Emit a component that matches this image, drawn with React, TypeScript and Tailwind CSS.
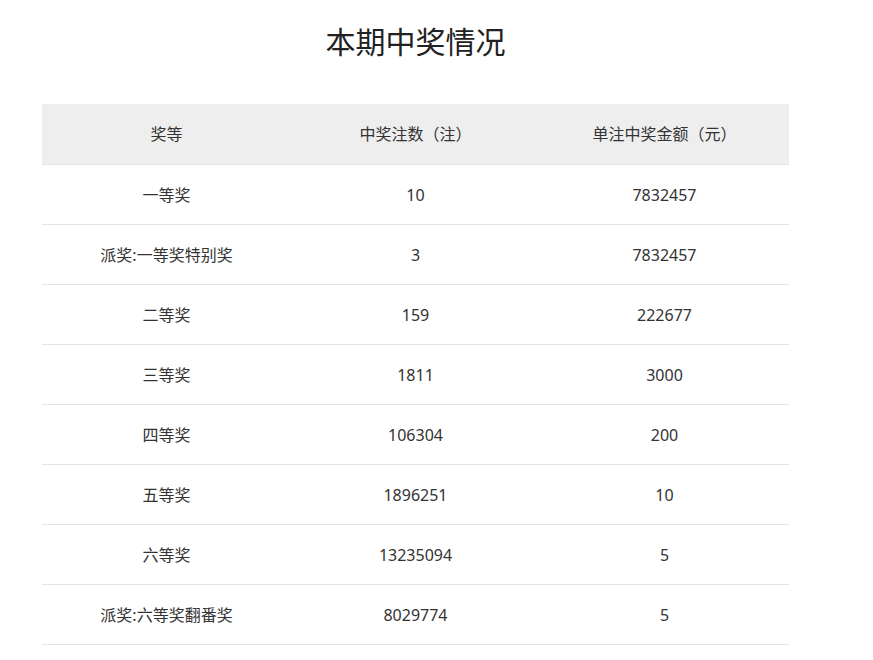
import { type FC } from "react";

type Row = { level: string; count: string; amount: string };

const rows: Row[] = [
  { level: "一等奖", count: "10", amount: "7832457" },
  { level: "派奖:一等奖特别奖", count: "3", amount: "7832457" },
  { level: "二等奖", count: "159", amount: "222677" },
  { level: "三等奖", count: "1811", amount: "3000" },
  { level: "四等奖", count: "106304", amount: "200" },
  { level: "五等奖", count: "1896251", amount: "10" },
  { level: "六等奖", count: "13235094", amount: "5" },
  { level: "派奖:六等奖翻番奖", count: "8029774", amount: "5" },
];

const App: FC = () => {
  return (
    <main
      className="w-full min-h-[660px] bg-white text-[#333] [text-spacing-trim:space-all]"
      style={{ fontFamily: '"Noto Sans", "Noto Sans CJK SC", sans-serif' }}
    >
      <div className="w-[747px] ml-[42px] flex flex-col">
        {/* title */}
        <h1 className="text-[30px] leading-[40px] text-center text-[#222] pt-[22px] pb-[42px]">
          本期中奖情况
        </h1>

        {/* table */}
        <div className="w-full flex flex-col text-[16px]">
          <div className="grid grid-cols-3 h-[61px] bg-[#eeeeee] border-b border-[#e4e4e4] items-center text-center">
            <div>奖等</div>
            <div>中奖注数（注）</div>
            <div>单注中奖金额（元）</div>
          </div>
          {rows.map((row, index) => (
            <div
              key={index}
              className="grid grid-cols-3 h-[60px] border-b border-[#e4e4e4] items-center text-center"
            >
              <div>{row.level}</div>
              <div>{row.count}</div>
              <div>{row.amount}</div>
            </div>
          ))}
        </div>
      </div>
    </main>
  );
};

export default App;
